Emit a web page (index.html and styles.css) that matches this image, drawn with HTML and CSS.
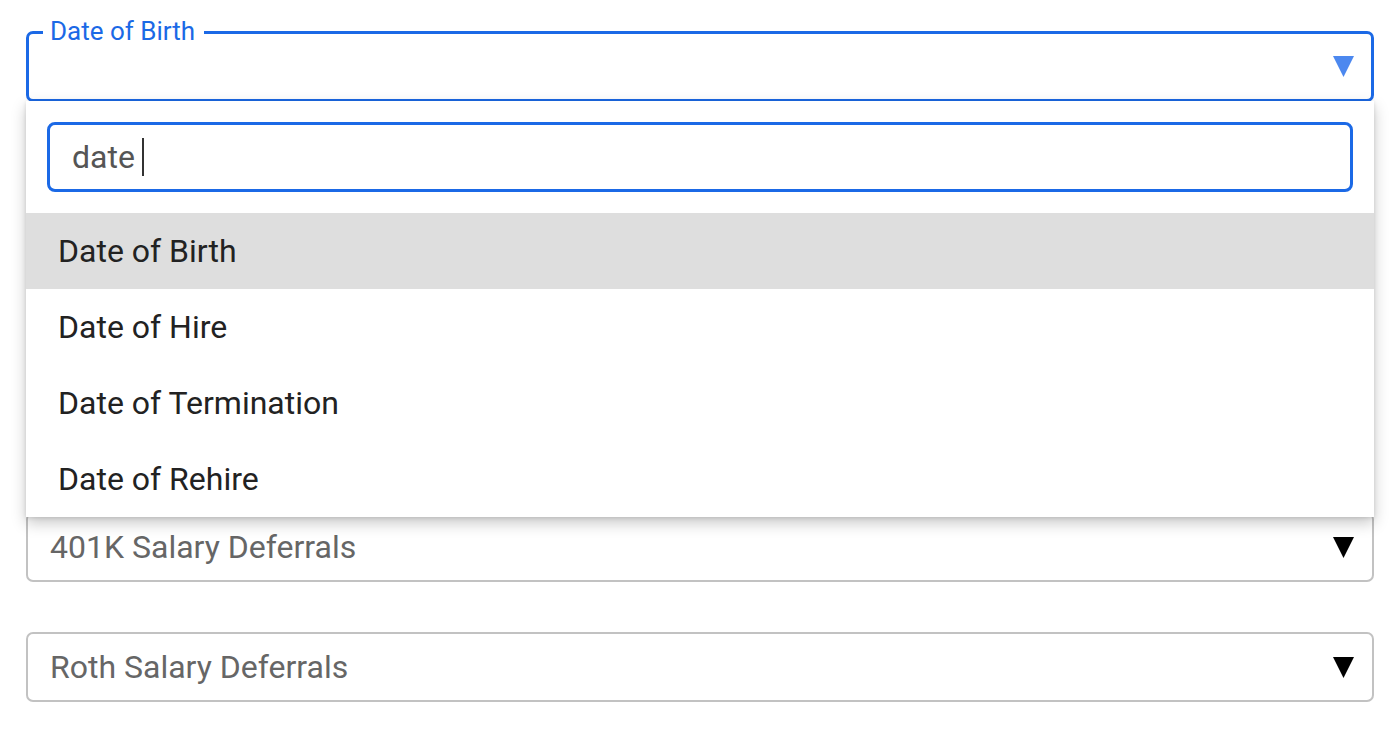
FILE: index.html
```html
<!DOCTYPE html>
<html lang="en">
<head>
<meta charset="utf-8">
<title>Field mapping</title>
<link rel="stylesheet" href="styles.css">
</head>
<body>
<div class="form">
  <div class="field field-open">
    <span class="field-label">Date of Birth</span>
    <span class="field-value"></span>
    <svg class="arrow arrow-blue" viewBox="0 0 21 21" width="21" height="21"><path d="M0 0H21L10.5 21Z"/></svg>
    <div class="panel">
      <div class="search"><span class="search-text">date</span><span class="caret"></span></div>
      <ul class="options">
        <li class="option option-active">Date of Birth</li>
        <li class="option">Date of Hire</li>
        <li class="option">Date of Termination</li>
        <li class="option">Date of Rehire</li>
      </ul>
    </div>
  </div>
  <div class="field"><span class="field-value"></span><svg class="arrow" viewBox="0 0 21 21" width="21" height="21"><path d="M0 0H21L10.5 21Z"/></svg></div>
  <div class="field"><span class="field-value"></span><svg class="arrow" viewBox="0 0 21 21" width="21" height="21"><path d="M0 0H21L10.5 21Z"/></svg></div>
  <div class="field"><span class="field-value"></span><svg class="arrow" viewBox="0 0 21 21" width="21" height="21"><path d="M0 0H21L10.5 21Z"/></svg></div>
  <div class="field"><span class="field-value">401K Salary Deferrals</span><svg class="arrow" viewBox="0 0 21 21" width="21" height="21"><path d="M0 0H21L10.5 21Z"/></svg></div>
  <div class="field"><span class="field-value">Roth Salary Deferrals</span><svg class="arrow" viewBox="0 0 21 21" width="21" height="21"><path d="M0 0H21L10.5 21Z"/></svg></div>
</div>
</body>
</html>
```
FILE: styles.css
```css
* { box-sizing: border-box; }
html, body { margin: 0; padding: 0; background: #fff; }
body {
  font-family: Roboto, "Liberation Sans", Arial, sans-serif;
  width: 1394px;
  height: 730px;
  overflow: hidden;
}
.form {
  display: flex;
  flex-direction: column;
  gap: 50px;
  padding: 31px 20px 0 26px;
}
.field {
  position: relative;
  height: 70px;
  border: 2px solid #c2c2c2;
  border-radius: 7px;
  display: flex;
  align-items: center;
  justify-content: space-between;
  padding: 0 18px 0 22px;
  background: #fff;
}
.field-value {
  font-size: 32px;
  line-height: 38px;
  color: #666;
}
.arrow { display: block; fill: #000; }
.field-open {
  height: 71px;
  border: 3px solid #1b69e6;
  border-radius: 7px;
  padding-right: 17px;
}
.arrow-blue { fill: #4c88ef; }
.field-label {
  position: absolute;
  top: -18px;
  left: 14px;
  padding: 0 9px 0 7px;
  background: #fff;
  font-size: 26px;
  line-height: 30px;
  color: #1b69e6;
}
.panel {
  position: absolute;
  top: calc(100% + 2px);
  left: -3px;
  right: -3px;
  background: #fff;
  padding-top: 21px;
  box-shadow: 0 6px 14px rgba(0, 0, 0, 0.22), 0 1px 4px rgba(0, 0, 0, 0.12);
  z-index: 10;
}
.search {
  margin: 0 21px 21px 21px;
  height: 70px;
  border: 3px solid #1b69e6;
  border-radius: 8px;
  display: flex;
  align-items: center;
  padding-left: 22px;
}
.search-text {
  font-size: 32px;
  line-height: 38px;
  color: #555;
}
.caret {
  display: block;
  width: 2px;
  height: 38px;
  margin-left: 7px;
  background: #333;
}
.options {
  list-style: none;
  margin: 0;
  padding: 0;
}
.option {
  height: 76px;
  line-height: 76px;
  padding-left: 32px;
  font-size: 32px;
  color: #222;
}
.option-active { background: #dedede; }
```
